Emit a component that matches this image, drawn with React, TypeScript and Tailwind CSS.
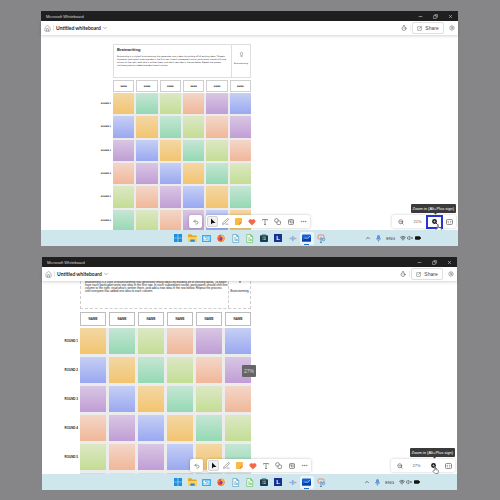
import React from "react";
import {
  Home, ChevronDown, Timer, SquareArrowOutUpRight, Settings, Minus, Copy, X, Undo2, PenLine, Heart,
  Ellipsis, ZoomOut, ChevronUp, Wifi, VolumeX, Lightbulb,
} from "lucide-react";

const swatches = [
  "from-[#f3d7a3] to-[#f2c470]",
  "from-[#c5e6d4] to-[#95d8b3]",
  "from-[#dce8c4] to-[#c4dd94]",
  "from-[#f3d6c8] to-[#f0b799]",
  "from-[#d9c6e3] to-[#c09ed5]",
  "from-[#c6cff4] to-[#9aa8f0]",
];

const lines = [
  "Brainwriting is a style of brainstorming that generates many ideas by building off of existing ideas. To begin",
  "have each participant write one idea in the first row. In each subsequent round, participants should shift one",
  "column to the right, read what's written there, and add a new idea in the row below. Repeat the process",
  "until everyone has added one idea to each column.",
];

const six = [0, 1, 2, 3, 4, 5];

const sizes = {
  small: {
    board: "ml-[59px] mt-[9px] w-[151px]",
    indent: "ml-[13px]",
    card: "h-[34px] border border-[#dedede]",
    copy: "px-[3px] pt-[3px]",
    title: "text-[4px] leading-[4px]",
    body: "mt-[3px] font-['DejaVu_Sans',sans-serif] text-[2px] leading-[3px]",
    side: "w-[19px] border-l border-[#dedede] pt-[7px]",
    bulb: "size-[5px]",
    caption: "mt-[5px] font-['DejaVu_Sans',sans-serif] text-[2px] leading-[3px]",
    names: "mt-[2px] gap-[2px]",
    name: "h-[12px] border-[#cfcfcf] font-['DejaVu_Sans',sans-serif] text-[2px]",
    rows: "mt-px h-[138px]",
    labels: "w-[13px] gap-[2px] pr-[2px] font-['DejaVu_Sans',sans-serif] text-[2px]",
    cells: "gap-[2px]",
    labelCount: 6,
    titled: true,
  },
  large: {
    board: "ml-[21px] -mt-[15px] w-[188px]",
    indent: "ml-[17px]",
    card: "h-[43px] border border-dashed border-[#cecece]",
    copy: "px-[4px] pt-[14px]",
    title: "text-[5px] leading-[6px]",
    body: "font-['Liberation_Sans_Narrow','Liberation_Sans',sans-serif] text-[3px] leading-[3px]",
    side: "w-[22px] border-l border-dashed border-[#cecece] pt-[10px]",
    bulb: "size-[6px]",
    caption: "mt-[6px] font-['Liberation_Sans_Narrow','Liberation_Sans',sans-serif] text-[3px] leading-[4px]",
    names: "mt-[3px] gap-[3px]",
    name: "h-[14px] border-[#bdbdbd] text-[3px]",
    rows: "mt-[2px] h-[171px]",
    labels: "w-[17px] gap-[3px] pr-[2px] text-[3px]",
    cells: "gap-[3px]",
    labelCount: 5,
    titled: false,
  },
};

function Board({ size }: { size: "small" | "large" }) {
  const s = sizes[size];
  return (
    <div className={s.board}>
      <section className={`${s.indent} ${s.card} flex`}>
        <div className={`${s.copy} min-w-0 flex-1 whitespace-nowrap`}>
          {s.titled && <h2 className={`${s.title} font-bold`}>Brainwriting</h2>}
          <p className={s.body}>
            {lines.map((l) => (
              <span key={l} className="block">{l}</span>
            ))}
          </p>
        </div>
        <div className={`${s.side} flex flex-col items-center`}>
          <Lightbulb className={s.bulb} strokeWidth={1.5} />
          <span className={s.caption}>Brainstorming</span>
        </div>
      </section>
      <div className={`${s.indent} ${s.names} grid grid-cols-6`}>
        {six.map((i) => (
          <div key={i} className={`${s.name} flex items-center justify-center border font-bold`}>NAME</div>
        ))}
      </div>
      <div className={`${s.rows} flex`}>
        <div className={`${s.labels} grid grid-rows-6 items-center text-right leading-[3px] font-bold whitespace-nowrap`}>
          {six.slice(0, s.labelCount).map((i) => (
            <span key={i}>ROUND {i + 1}</span>
          ))}
        </div>
        <div className={`${s.cells} grid flex-1 grid-cols-6 grid-rows-6 bg-[#ececec]`}>
          {six.map((r) =>
            six.map((c) => (
              <div key={`${r}-${c}`} className={`bg-linear-to-b ${swatches[(c - r + 6) % 6]}`} />
            ))
          )}
        </div>
      </div>
    </div>
  );
}

function Tool({ label, active, children }: { label: string; active?: boolean; children: React.ReactNode }) {
  return (
    <button
      aria-label={label}
      className={`flex h-[11px] w-[11px] items-center justify-center rounded-[2px] ${active ? "border border-[#d4d4d4] bg-[#f0f0f0]" : ""}`}
    >
      {children}
    </button>
  );
}

function Toolbar() {
  return (
    <div className="absolute bottom-[2px] left-[148px] flex gap-[4px] text-[#666]">
      <div className="flex h-[13px] w-[13px] items-center justify-center rounded-[2px] bg-white shadow-[0_0_3px_rgba(0,0,0,0.25)]">
        <Tool label="Undo"><Undo2 size={6} strokeWidth={2.5} /></Tool>
      </div>
      <div className="flex h-[13px] w-[104px] items-center justify-around rounded-[2px] bg-white shadow-[0_0_3px_rgba(0,0,0,0.25)]">
        <Tool label="Select" active>
          <svg viewBox="0 0 6 7" className="h-[7px] w-[6px]"><path d="M1 .5v6l1.600-1.600H5.500z" fill="#111" /></svg>
        </Tool>
        <Tool label="Ink"><PenLine size={7} strokeWidth={2} /></Tool>
        <Tool label="Note">
          <svg viewBox="0 0 8 8" className="size-[7px]">
            <path d="M1 0h6a1 1 0 0 1 1 1v4L5 8H1a1 1 0 0 1-1-1V1a1 1 0 0 1 1-1" fill="#f9b945" />
            <path d="M8 5H6a1 1 0 0 0-1 1v2z" fill="#ee7a4c" />
          </svg>
        </Tool>
        <Tool label="Reactions"><Heart size={8} strokeWidth={1} fill="#f0694a" color="#f0694a" /></Tool>
        <Tool label="Text">
          <svg viewBox="0 0 6 6" className="size-[6px]"><path d="M.5 1.500V.5h5v1M3 .5v5M2 5.500h2" fill="none" stroke="#666" strokeWidth=".7" /></svg>
        </Tool>
        <Tool label="Shapes">
          <svg viewBox="0 0 7 7" className="size-[7px]" fill="#fff" stroke="#666" strokeWidth=".7">
            <circle cx="2.500" cy="2.500" r="1.900" /><rect x="3" y="3" width="3.500" height="3.500" rx=".8" />
          </svg>
        </Tool>
        <Tool label="Templates">
          <svg viewBox="0 0 7 7" className="size-[6px]" fill="none" stroke="#666" strokeWidth=".8">
            <rect x=".6" y=".6" width="5.800" height="5.800" rx="1" /><path d="M.6 2.300h5.800M2.800 2.300v2.200h3.600" />
          </svg>
        </Tool>
        <Tool label="More"><Ellipsis size={7} strokeWidth={2} /></Tool>
      </div>
    </div>
  );
}

function Hand() {
  return (
    <svg viewBox="0 0 12 14" className="absolute top-[7px] left-[3px] h-[8px] w-[7px]">
      <path
        d="M4 8V2a1 1 0 0 1 2 0v4l4 .8q1.300.4 1.100 2L10.500 13H5L1 9q.6-1.400 2-.5z"
        fill="#fff" stroke="#444" strokeWidth="1"
      />
    </svg>
  );
}

function ZoomBar({ value, highlight }: { value: string; highlight?: boolean }) {
  return (
    <div className="absolute right-[2px] bottom-[2px] flex flex-col items-end gap-[2px]">
      <div role="tooltip" className="relative flex h-[9px] items-center rounded-[1px] bg-[#3a3a3a] px-[2px] text-[4px] leading-[5px] font-medium whitespace-nowrap text-white">
        Zoom in (Alt+Plus sign)
        <span className="absolute right-[19px] -bottom-[1px] size-[3px] rotate-45 bg-[#3a3a3a]" />
      </div>
      <div className="flex h-[13px] w-[64px] items-center rounded-[2px] bg-white text-[#555] shadow-[0_0_3px_rgba(0,0,0,0.22)]">
        <button aria-label="Zoom out" className="flex w-[17px] justify-center"><ZoomOut size={6} strokeWidth={2.5} /></button>
        <span className="w-[17px] text-center text-[4px] leading-[5px]">{value}</span>
        <button
          aria-label="Zoom in"
          className={`relative flex h-[14px] w-[17px] items-center justify-center ${highlight ? "border-2 border-[#2536cf]" : ""}`}
        >
          <svg viewBox="0 0 7 7" className="size-[6px]">
            <circle cx="2.900" cy="2.900" r="2.800" fill="#1a1a1a" /><path d="m4.500 4.500 2 2" stroke="#1a1a1a" strokeWidth="1.100" />
            <path d="M2.900 1.500v2.800M1.500 2.900h2.800" stroke="#eee" strokeWidth=".6" />
          </svg>
          <span className="absolute top-0 left-[4px]"><Hand /></span>
        </button>
        <button aria-label="Fit to screen" className="ml-[2px] flex w-[9px] justify-center">
          <svg viewBox="0 0 8 7" className="h-[6px] w-[7px]" fill="none" stroke="#555" strokeWidth=".8">
            <rect x=".5" y=".7" width="7" height="5.600" rx="1" /><path d="M3 2.500 2 3.500l1 1M5 2.500l1 1-1 1" />
          </svg>
        </button>
      </div>
    </div>
  );
}

const docIcon = (stroke: string, fill: string) => (
  <svg viewBox="0 0 9 10" className="size-[9px]">
    <path d="M1.500.5h4.200L8 2.800v6.700H1.500z" fill="#f7fbfc" stroke={stroke} strokeWidth=".7" />
    <path d="M5.500.3v2.700h2.700z" fill={stroke} />
    <path d="M3 4.200h2M3 5.600h3.500M3 7h3.500" stroke={stroke} strokeWidth=".6" />
    <rect x="4.800" y="5.800" width="2.300" height="2" fill={fill} />
  </svg>
);

const apps: { name: string; open?: boolean; icon: React.ReactNode }[] = [
  {
    name: "Start",
    icon: (
      <svg viewBox="0 0 8 8" className="size-[8px]" fill="#1c8fe0">
        <path d="M0 0h3.700v3.700H0zM4.300 0H8v3.700H4.300zM0 4.300h3.700V8H0zM4.300 4.300H8V8H4.300z" />
      </svg>
    ),
  },
  {
    name: "Files",
    icon: (
      <svg viewBox="0 0 9 8" className="h-[8px] w-[9px]">
        <path d="M0 1q0-.8.8-.8h2.500L4.300 1.500H8q.8 0 .8.8V7.500H0z" fill="#e5a52a" />
        <path d="M0 3h9v4.600H0z" fill="#fbd35c" /><path d="M2.300 5.500h4.400v2.200H2.300z" fill="#2b83d6" />
      </svg>
    ),
  },
  {
    name: "Control Panel",
    icon: (
      <svg viewBox="0 0 9 7" className="h-[7px] w-[9px]">
        <rect width="9" height="7" rx=".8" fill="#3b9fdb" /><rect x=".8" y=".8" width="7.400" height="5.400" fill="#7cc9ee" />
        <circle cx="3" cy="3" r="1.500" fill="#fff" /><path d="M3 3V1.500A1.500 1.500 0 0 1 4.500 3z" fill="#f08b36" />
        <path d="M5.500 2.500h2M5.500 4h2M1.500 5.400h5" stroke="#fff" strokeWidth=".6" />
      </svg>
    ),
  },
  {
    name: "Firefox",
    icon: (
      <svg viewBox="0 0 9 9" className="size-[8px]">
        <circle cx="4.500" cy="4.800" r="4" fill="#f4503a" />
        <path d="M5 .2q3.500 1.500 3.500 4.800Q8 8 5 8.700 7 5 4 2.500z" fill="#fdb22b" />
        <circle cx="4.400" cy="5" r="1.900" fill="#7a3fc4" /><path d="M.7 2.500Q2 1 2 3.300l2 .7-1.500 1z" fill="#fb8b24" />
      </svg>
    ),
  },
  { name: "Writer", icon: docIcon("#4a98ba", "#7fc0dc") },
  { name: "Calc", icon: docIcon("#5ab852", "#8ddb80") },
  {
    name: "Store",
    icon: (
      <svg viewBox="0 0 8 8" className="size-[8px]">
        <path d="M2.500 1.500V.4h3v1.100" fill="none" stroke="#1f6b9a" strokeWidth=".6" />
        <rect y="1.200" width="8" height="6.800" rx=".9" fill="#17395c" />
        <path d="M2.300 2.600h1.500v1.500H2.300z" fill="#f25022" /><path d="M4.200 2.600h1.500v1.500H4.200z" fill="#7fba00" />
        <path d="M2.300 4.500h1.500V6H2.300z" fill="#00a4ef" /><path d="M4.200 4.500h1.500V6H4.200z" fill="#ffb900" />
      </svg>
    ),
  },
  {
    name: "L",
    icon: <span className="flex size-[8px] items-center justify-center bg-[#1b2f8c] text-[6px] leading-[8px] font-bold text-white">L</span>,
  },
  {
    name: "Audio",
    icon: (
      <svg viewBox="0 0 9 8" className="h-[7px] w-[8px]" strokeWidth=".9">
        <path d="M1 3.300v1.400M2.500 2.500v3" stroke="#8fabd8" /><path d="M4.300 1v6" stroke="#5f82c4" />
        <path d="M5.800 2.500v3M7.300 3.300v1.400" stroke="#e07a72" /><path d="M0 4h9" stroke="#8fa9d8" strokeWidth=".5" />
      </svg>
    ),
  },
  {
    name: "Whiteboard",
    open: true,
    icon: (
      <svg viewBox="0 0 9 8" className="h-[8px] w-[9px]">
        <rect y=".5" width="9" height="7" rx=".8" fill="#1461d6" />
        <path d="M0 5.500q2-3 3.700-1T9 3v4.500H0z" fill="#0a3ca5" />
        <path d="M1.500 5q1.500-2 2.500-.8T8 2" fill="none" stroke="#dcecff" strokeWidth=".6" />
      </svg>
    ),
  },
  {
    name: "Snip",
    icon: (
      <svg viewBox="0 0 9 9" className="size-[9px]" fill="none">
        <rect x="1" y="1" width="6" height="4" rx="1" stroke="#e58a78" strokeWidth="1" />
        <path d="M4 3v5" stroke="#7292b5" strokeWidth="1" /><circle cx="6.500" cy="5.500" r="1.300" stroke="#4d8fd1" strokeWidth=".8" />
        <path d="M3 8.500h2" stroke="#5c6f80" strokeWidth=".8" />
      </svg>
    ),
  },
];

function Taskbar() {
  return (
    <footer className="grid h-[16px] grid-cols-[1fr_158px_1fr] items-center bg-[#d0e6ed] text-[#333]">
      <nav className="col-start-2 flex">
        {apps.map((a) => (
          <button
            key={a.name}
            aria-label={a.name}
            className={`relative flex h-[13px] flex-1 items-center justify-center rounded-[2px] ${a.open ? "bg-[#ebf5f9]" : ""}`}
          >
            {a.icon}
            {a.open && <span className="absolute bottom-0 h-px w-[5px] bg-[#1673c9]" />}
          </button>
        ))}
      </nav>
      <div className="flex items-center justify-end pr-[37px]">
        <ChevronUp size={6} strokeWidth={2.5} />
        <svg viewBox="0 0 5 7" className="ml-[5px] h-[7px] w-[5px]" fill="none" stroke="#4b86c8" strokeWidth=".7">
          <rect x="1.500" y=".4" width="2" height="3.600" rx="1" fill="#5d97d6" /><path d="M.5 3q0 2.200 2 2.200t2-2.200M2.500 5.200v1.500" />
        </svg>
        <span className="ml-[5px] text-[4px] leading-[5px]">ENG</span>
        <Wifi size={6} strokeWidth={2.5} className="ml-[5px]" />
        <VolumeX size={6} strokeWidth={2} className="ml-[1px]" />
        <svg viewBox="0 0 7 4" className="ml-[2px] h-[4px] w-[6px]"><rect width="6" height="4" rx="1" fill="#111" /><rect x="6" y="1" width="1" height="2" fill="#111" /></svg>
      </div>
    </footer>
  );
}

function Window({ canvas, children }: { canvas: string; children: React.ReactNode }) {
  return (
    <section className="bg-white">
      <div className="flex h-[10px] items-center bg-[#1f1f1f] pl-[5px] text-[4px] leading-[5px] text-[#d8d8d8]">
        <span className="flex-1">Microsoft Whiteboard</span>
        <button aria-label="Minimize" className="flex w-[15px] justify-center"><Minus size={5} strokeWidth={2.5} /></button>
        <button aria-label="Restore" className="flex w-[15px] justify-center"><Copy size={5} strokeWidth={2.5} className="-scale-x-100" /></button>
        <button aria-label="Close" className="flex w-[15px] justify-center"><X size={5} strokeWidth={2.5} /></button>
      </div>
      <header className="relative z-10 flex h-[14px] items-center bg-white px-[3px] text-[#444] shadow-[0_1px_3px_rgba(0,0,0,0.18)]">
        <button aria-label="Home"><Home size={7} strokeWidth={1.5} color="#555" /></button>
        <span className="ml-[2px] h-[6px] w-px bg-[#e6e6e6]" />
        <h1 className="ml-[2px] font-['Lato',sans-serif] text-[5px] leading-[6px] font-bold text-[#1c1c1c]">Untitled whiteboard</h1>
        <ChevronDown size={6} strokeWidth={1.5} className="ml-px" />
        <div className="flex-1" />
        <button aria-label="Timer"><Timer size={6} strokeWidth={2} /></button>
        <span className="ml-[3px] h-[6px] w-px bg-[#ececec]" />
        <button className="ml-px flex h-[12px] w-[32px] items-center justify-center gap-[3px] rounded-[2px] border border-[#e0e0e0] bg-white text-[5px] leading-[6px]">
          <SquareArrowOutUpRight size={5} strokeWidth={2} />
          Share
        </button>
        <button aria-label="Settings" className="ml-[5px]"><Settings size={6} strokeWidth={1.5} /></button>
      </header>
      <main className={`relative overflow-hidden ${canvas}`}>{children}</main>
      <Taskbar />
    </section>
  );
}

export default function App() {
  return (
    <div className="flex min-h-screen flex-col gap-[11px] bg-[#868689] py-[11px] pr-[42px] pl-[41px] font-['Liberation_Sans',Arial,sans-serif] text-[#1c1c1c]">
      <Window canvas="h-[195px]">
        <Board size="small" />
        <Toolbar />
        <ZoomBar value="21%" highlight />
      </Window>
      <div className="pr-px pl-px">
        <Window canvas="h-[193px]">
          <Board size="large" />
          <span className="absolute top-[84px] left-[200px] flex h-[12px] w-[14px] items-center justify-center rounded-[1px] bg-[#666669] text-[5px] leading-[6px] text-[#d8d8d8]">27%</span>
          <Toolbar />
          <ZoomBar value="27%" />
        </Window>
      </div>
    </div>
  );
}
